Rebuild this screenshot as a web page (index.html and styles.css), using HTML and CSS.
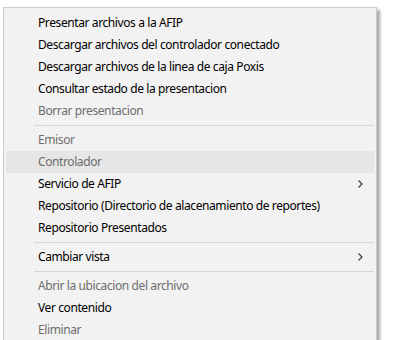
FILE: index.html
```html
<!DOCTYPE html>
<html lang="es">
<head>
    <meta charset="UTF-8">
    <title>Menu contextual</title>
    <link rel="stylesheet" href="styles.css">
</head>
<body>
    <ul class="menu">
        <li class="item">Presentar archivos a la AFIP</li>
        <li class="item">Descargar archivos del controlador conectado</li>
        <li class="item">Descargar archivos de la linea de caja Poxis</li>
        <li class="item">Consultar estado de la presentacion</li>
        <li class="item disabled">Borrar presentacion</li>
        <li class="sep"></li>
        <li class="item disabled">Emisor</li>
        <li class="item disabled hover">Controlador</li>
        <li class="item sub">Servicio de AFIP
            <svg class="arrow" width="5" height="8" viewBox="0 0 5 8"><path d="M0.5 0.5 L4 4 L0.5 7.5" fill="none" stroke="#333" stroke-width="1.1"/></svg>
        </li>
        <li class="item">Repositorio (Directorio de alacenamiento de reportes)</li>
        <li class="item">Repositorio Presentados</li>
        <li class="sep"></li>
        <li class="item sub">Cambiar vista
            <svg class="arrow" width="5" height="8" viewBox="0 0 5 8"><path d="M0.5 0.5 L4 4 L0.5 7.5" fill="none" stroke="#333" stroke-width="1.1"/></svg>
        </li>
        <li class="sep"></li>
        <li class="item disabled">Abrir la ubicacion del archivo</li>
        <li class="item">Ver contenido</li>
        <li class="item disabled">Eliminar</li>
    </ul>
</body>
</html>
```

FILE: styles.css
```css
html, body {
    margin: 0;
    height: 340px;
    overflow: hidden;
    background-color: #ffffff;
}
body {
    padding: 7px 0 0 3px;
    font-family: 'Noto Sans', 'Open Sans', sans-serif;
    font-size: 12px;
    letter-spacing: -0.4px;
    color: #000000;
}
.menu {
    list-style-type: none;
    margin: 0;
    padding: 4px 2px 0;
    width: 368px;
    background-color: #f2f2f2;
    border: 1px solid #cccccc;
    box-shadow: 3px 3px 3px rgba(0, 0, 0, 0.35);
}
.item {
    position: relative;
    height: 22px;
    line-height: 22px;
    padding-left: 32px;
    white-space: nowrap;
}
.item.disabled {
    color: #6d6d6d;
}
.item.hover {
    background-color: #e6e6e6;
}
.arrow {
    position: absolute;
    right: 11px;
    top: 7px;
}
.sep {
    height: 1px;
    margin: 3px 0 3px 28px;
    background-color: #d7d7d7;
}
```
